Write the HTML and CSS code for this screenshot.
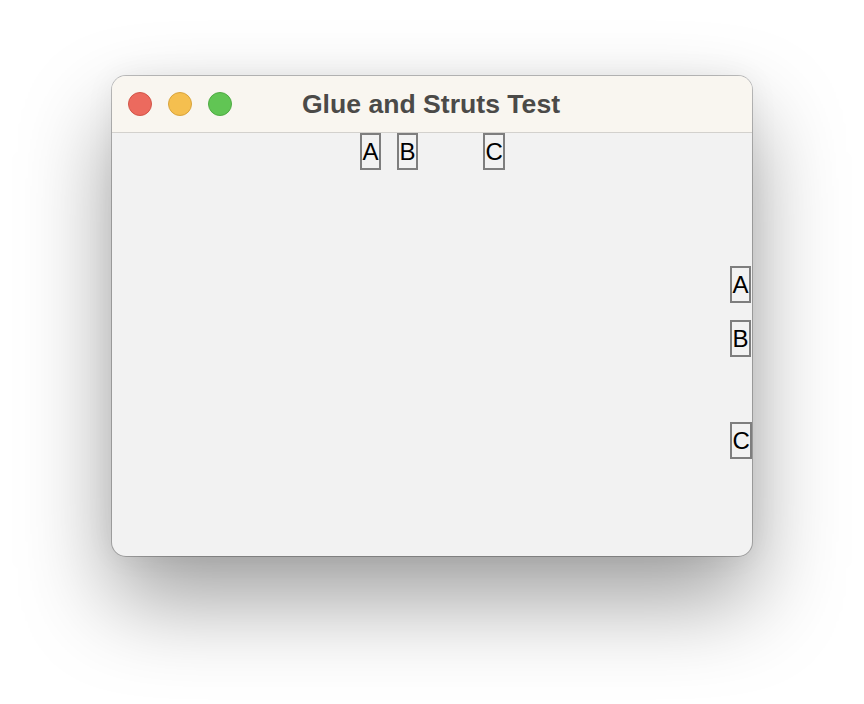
FILE: index.html
```html
<!DOCTYPE html>
<html>
<head>
<meta charset="utf-8">
<link rel="stylesheet" href="styles.css">
</head>
<body>
<div class="stage">
  <div class="window">
    <div class="titlebar">
      <div class="lights">
        <span class="light red"></span>
        <span class="light yellow"></span>
        <span class="light green"></span>
      </div>
      <div class="title">Glue and Struts Test</div>
      <div></div>
    </div>
    <div class="content">
      <div class="hbox">
        <span class="lbl">A</span>
        <span class="lbl strut">B</span>
        <span class="lbl glue">C</span>
      </div>
      <div class="vbox">
        <span class="lbl">A</span>
        <span class="lbl vstrut">B</span>
        <span class="lbl vglue">C</span>
      </div>
    </div>
  </div>
</div>
</body>
</html>
```
FILE: styles.css
```css
html, body {
  margin: 0;
  padding: 0;
  background: #ffffff;
}
body {
  width: 864px;
  height: 704px;
  overflow: hidden;
  font-family: "Liberation Sans", Arial, sans-serif;
}
.stage {
  padding: 76px 0 0 112px;
}
.window {
  width: 640px;
  height: 480px;
  border-radius: 14px;
  overflow: hidden;
  display: flex;
  flex-direction: column;
  box-shadow: 0 0 0 1px rgba(0,0,0,0.24), 0 44px 90px rgba(0,0,0,0.38), 0 0 30px rgba(0,0,0,0.06);
  background: #f2f2f2;
}
.titlebar {
  height: 56px;
  flex: none;
  background: #f9f6f0;
  border-bottom: 1px solid #d3d1cd;
  display: grid;
  grid-template-columns: 1fr auto 1fr;
  align-items: center;
}
.lights {
  display: flex;
  gap: 16px;
  padding-left: 16px;
}
.light {
  width: 22px;
  height: 22px;
  border-radius: 50%;
  display: block;
}
.red { background: #ec6a5e; border: 1px solid #d25548; }
.yellow { background: #f5bf4f; border: 1px solid #d9a43c; }
.green { background: #61c554; border: 1px solid #4fab43; }
.title {
  font-weight: bold;
  font-size: 26.6px;
  color: #4b4a48;
  padding-top: 0;
  padding-right: 2px;
}
.content {
  flex: 1;
  display: flex;
  flex-direction: column;
}
.hbox {
  display: flex;
  padding-left: 248px;
}
.lbl {
  display: block;
  border: 2px solid #7e7e7e;
  font-size: 24px;
  line-height: 33px;
  height: 33px;
  color: #000;
  padding: 0 0.5px;
}
.strut { margin-left: 16px; }
.glue { margin-left: 65px; }
.vbox {
  display: flex;
  flex-direction: column;
  align-items: flex-start;
  align-self: flex-end;
  margin-top: 96px;
  width: 22px;
}
.vstrut { margin-top: 17px; }
.vglue { margin-top: 65px; }
```
